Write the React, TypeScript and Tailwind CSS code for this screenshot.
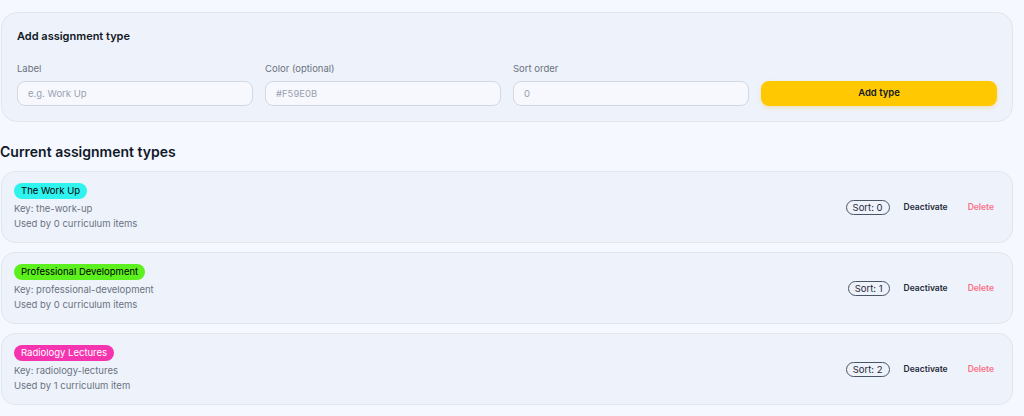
const types = [
  { label: "The Work Up", key: "the-work-up", used: "Used by 0 curriculum items", sort: 0, bg: "bg-[#2ef3ee]", fg: "text-black" },
  { label: "Professional Development", key: "professional-development", used: "Used by 0 curriculum items", sort: 1, bg: "bg-[#5cf01f]", fg: "text-black" },
  { label: "Radiology Lectures", key: "radiology-lectures", used: "Used by 1 curriculum item", sort: 2, bg: "bg-[#f535b0]", fg: "text-white" },
];

function Field({ label, placeholder }: { label: string; placeholder: string }) {
  return (
    <div className="flex flex-col">
      <label className="text-[9.5px] text-gray-500 mb-[6px] leading-[12px]">{label}</label>
      <input
        placeholder={placeholder}
        className="h-[25px] rounded-[8px] border border-[#d4d8e1] bg-[#f6f8fe] px-[10px] text-[9.5px] text-gray-700 placeholder:text-gray-400 outline-none"
      />
    </div>
  );
}

export default function App() {
  return (
    <div className="min-h-screen bg-[#f5f8ff] pr-[11px] pt-[12px] font-['Inter',sans-serif] text-gray-900">
      {/* Add form */}
      <section className="ml-[1px] rounded-[16px] border border-[#e2e6ef] bg-[#eef2fa] pl-[15px] pr-[15px] pt-[16px] pb-[15px]">
        <h2 className="text-[11px] font-semibold leading-[14px] text-[#111827]">Add assignment type</h2>
        <div className="mt-[20px] grid grid-cols-4 items-end gap-x-[12px]">
          <Field label="Label" placeholder="e.g. Work Up" />
          <Field label="Color (optional)" placeholder="#F59E0B" />
          <Field label="Sort order" placeholder="0" />
          <button className="h-[25px] rounded-[8px] bg-[#ffc800] text-[9.5px] font-semibold text-[#111827] shadow-[0_2px_4px_rgba(234,179,8,0.25)]">
            Add type
          </button>
        </div>
      </section>

      <h2 className="mt-[21px] text-[14px] font-semibold leading-[18px] text-[#111827]">Current assignment types</h2>

      <div className="mt-[10px] flex flex-col gap-[9px]">
        {types.map((t) => (
          <div
            key={t.key}
            className="ml-[1px] flex h-[72px] items-center justify-between rounded-[14px] border border-[#e2e6ef] bg-[#eef2fa] pl-[12px] pr-[18px]"
          >
            <div className="flex flex-col items-start">
              <span className={`rounded-full px-[7px] text-[9.5px] leading-[16px] ${t.bg} ${t.fg}`}>{t.label}</span>
              <span className="mt-[2px] text-[9.5px] leading-[15px] text-gray-500">Key: {t.key}</span>
              <span className="text-[9.5px] leading-[15px] text-gray-500">{t.used}</span>
            </div>
            <div className="flex items-center">
              <span className="rounded-full border border-gray-600 px-[6px] text-[9.5px] leading-[13px] text-gray-800">Sort: {t.sort}</span>
              <button className="ml-[14px] text-[8.5px] font-semibold text-gray-800">Deactivate</button>
              <button className="ml-[20px] text-[8.5px] font-semibold text-[#fb7185]">Delete</button>
            </div>
          </div>
        ))}
      </div>
    </div>
  );
}
